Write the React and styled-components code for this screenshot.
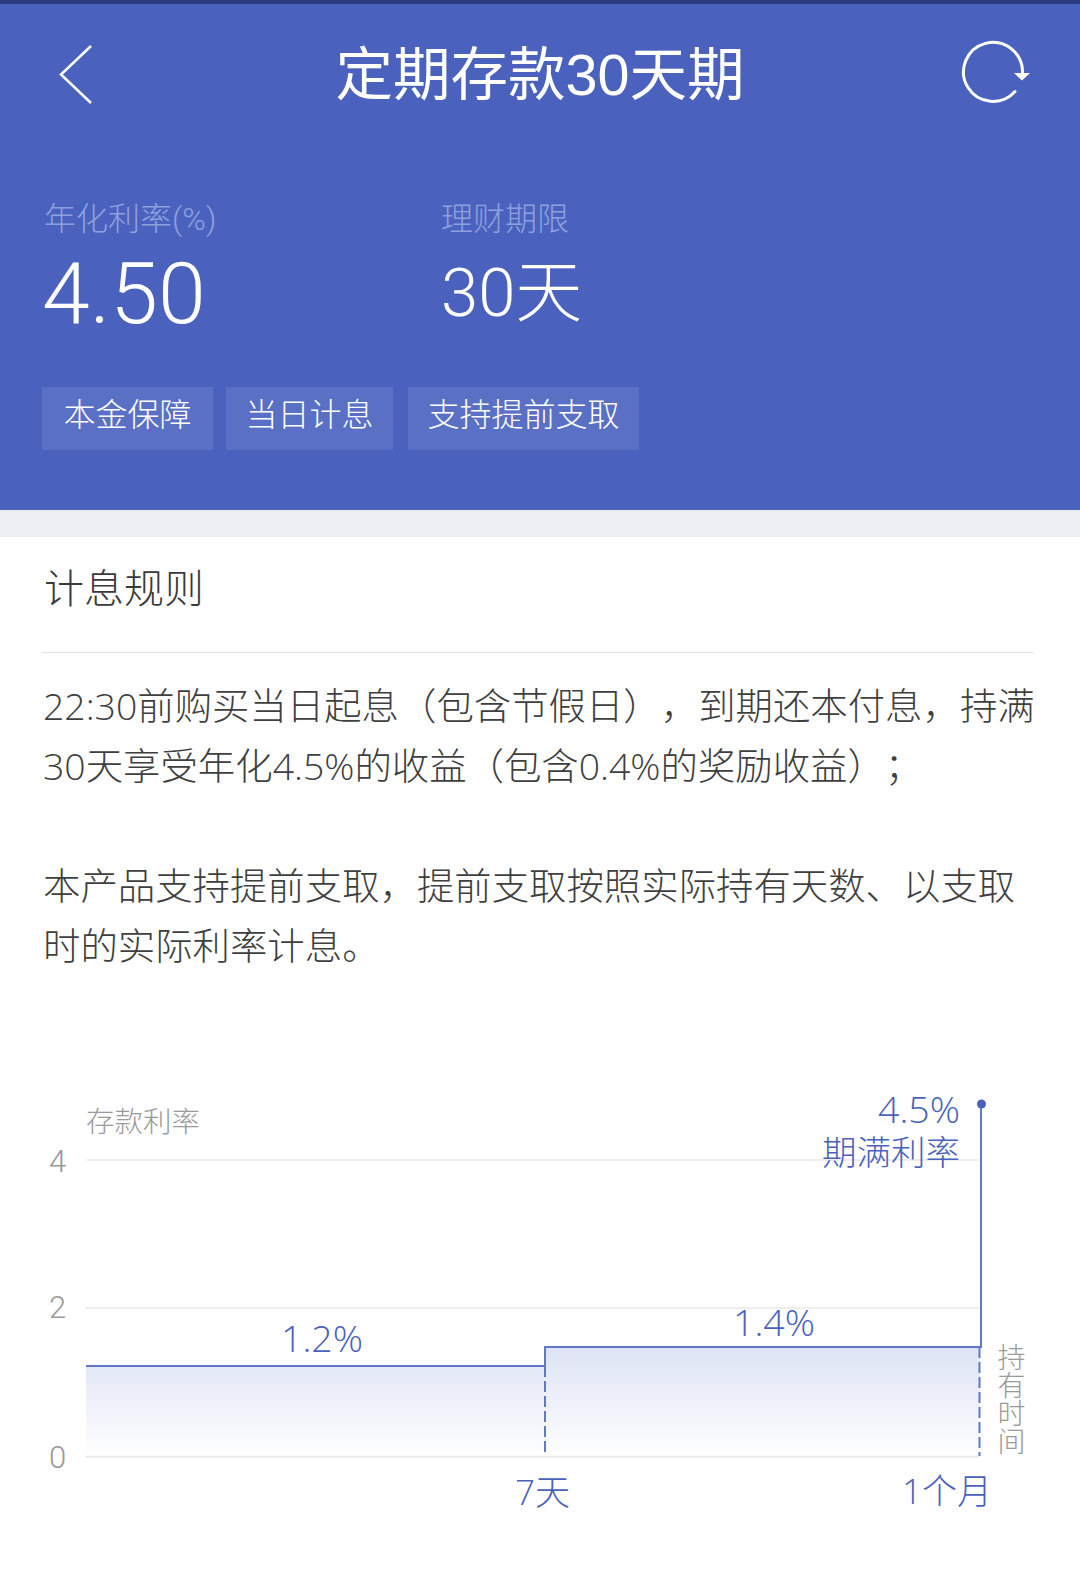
import styled, { createGlobalStyle } from 'styled-components';

const sansStack = `'Liberation Sans', 'Noto Sans CJK SC', sans-serif`;
const lightStack = `Roboto, 'Noto Sans CJK SC', sans-serif`;
const bodyStack = `'Open Sans', 'Noto Sans CJK SC', sans-serif`;

const GlobalStyle = createGlobalStyle`
  html, body {
    margin: 0;
    padding: 0;
    background: #fff;
  }
  body {
    font-family: ${sansStack};
    text-spacing-trim: space-all;
  }
`;

const Page = styled('div')`
  width: 1080px;
  height: 1587px;
  overflow: hidden;
  display: flex;
  flex-direction: column;
`;

const Header = styled('header')`
  height: 506px;
  background: #4a62bd;
  border-top: 4px solid #2b3b80;
  display: flex;
  flex-direction: column;
  color: #fff;
`;

const NavBar = styled('div')`
  height: 142px;
  display: grid;
  grid-template-columns: 1fr auto 1fr;
  align-items: center;
  padding: 0 50px 0 58px;
`;

const NavRight = styled('div')`
  display: flex;
  justify-content: flex-end;
`;

const NavLeft = styled('div')`
  display: flex;
`;

const NavTitle = styled('h1')`
  margin: 0 0 0 -8px;
  font-size: 57.5px;
  font-weight: 400;
  line-height: 70px;
`;

const Stats = styled('div')`
  display: flex;
  padding: 53px 0 0 44px;
`;

const Stat = styled('div')`
  width: ${(props) => props.$width}px;
  display: flex;
  flex-direction: column;
`;

const StatLabel = styled('span')`
  font-family: ${lightStack};
  font-weight: 300;
  font-size: 32px;
  line-height: 40px;
  color: #8fa0de;
`;

const StatValue = styled('span')`
  margin: ${(props) => props.$offset} 0 0 ${(props) => props.$shift}px;
  font-family: ${lightStack};
  font-size: ${(props) => props.$size}px;
  font-weight: 300;
  line-height: 84px;
`;

const Chips = styled('div')`
  display: flex;
  gap: 13px;
  margin: 51px 0 0 42px;
`;

const Chip = styled('span')`
  width: ${(props) => props.$width}px;
  height: 63px;
  padding-top: 7px;
  box-sizing: border-box;
  background: #5a70c5;
  font-family: ${lightStack};
  font-size: 32px;
  font-weight: 300;
  line-height: 42px;
  text-align: center;

  &:last-child {
    margin-left: 2px;
  }
`;

const Band = styled('div')`
  height: 27px;
  background: #eeeef5;
`;

const Rules = styled('section')`
  padding: 0 46px 0 42px;
`;

const RulesTitle = styled('h2')`
  margin: 0;
  height: 115px;
  border-bottom: 1px solid #e0e0e0;
  padding-left: 2px;
  font-family: ${lightStack};
  font-size: 40px;
  font-weight: 300;
  line-height: 105px;
  color: #3a3a3a;
`;

const RulesText = styled('p')`
  margin: 23px -6px 0 1px;
  font-family: ${bodyStack};
  font-size: 37.4px;
  font-weight: 300;
  line-height: 60px;
  color: #3f3f3f;

  & + & {
    margin-top: 60px;
  }
`;

const Chart = styled('svg')`
  display: block;
  margin-top: 104px;
  width: 1080px;
  height: 507px;
  flex: none;
`;

const GridLine = styled('line')`
  stroke: #e8e8e8;
  stroke-width: 1.5;
`;

const RateLine = styled('path')`
  fill: none;
  stroke: #6178c8;
  stroke-width: 2;
`;

const DashLine = styled('line')`
  stroke: #6178c8;
  stroke-width: 2;
  stroke-dasharray: 11 4;
`;

const AxisText = styled('text')`
  font-family: ${lightStack};
  font-weight: 300;
  font-size: ${(props) => props.$size || 28}px;
  fill: #9a9a9a;
`;

const VerticalAxisText = styled(AxisText)`
  writing-mode: vertical-rl;
  letter-spacing: 0.25px;
`;

const RateText = styled('text')`
  font-family: ${bodyStack};
  font-weight: 300;
  font-size: ${(props) => props.$size || 37.5}px;
  fill: #4a62bd;
  text-anchor: ${(props) => props.$anchor || 'start'};
`;

const RateCaption = styled(RateText)`
  font-family: ${sansStack};
  font-size: 34.5px;
`;

const ticks = [
  { label: '4', y: 1160, textY: 1172 },
  { label: '2', y: 1308, textY: 1318 },
  { label: '0', y: 1456.5, textY: 1468 },
];

const chips = [
  { label: '本金保障', width: 171 },
  { label: '当日计息', width: 167 },
  { label: '支持提前支取', width: 231 },
];

function BackIcon() {
  return (
    <svg width='36' height='62' viewBox='0 0 36 62' fill='none'>
      <path d='M33 2 L3 30.5 L33 59' stroke='#fff' strokeWidth='2.5' />
    </svg>
  );
}

function RefreshIcon() {
  return (
    <svg width='70' height='70' viewBox='0 -2 70 70' fill='none'>
      <path d='M55 49.6 A29.5 29.5 0 1 1 62.5 31' stroke='#fff' strokeWidth='3' strokeLinecap='round' />
      <path d='M54 31 L70 31 L62 38.5 Z' fill='#fff' />
    </svg>
  );
}

function RateChart() {
  return (
    <Chart viewBox='0 1080 1080 507'>
      <defs>
        <linearGradient id='rateFill' x1='0' y1='0' x2='0' y2='1'>
          <stop offset='0' stopColor='#dde3f5' />
          <stop offset='1' stopColor='#ffffff' />
        </linearGradient>
      </defs>

      {ticks.map((tick) => (
        <g key={tick.label}>
          <GridLine x1='86' x2='979' y1={tick.y} y2={tick.y} />
          <AxisText x='49' y={tick.textY} $size={31}>
            {tick.label}
          </AxisText>
        </g>
      ))}

      <path d='M86 1366 H545 V1347 H980 V1456 H86 Z' fill='url(#rateFill)' />
      <GridLine x1='86' x2='979' y1='1456.5' y2='1456.5' />
      <RateLine d='M86 1366 H545 V1347 H981 V1104' />
      <DashLine x1='545' x2='545' y1='1366' y2='1456' />
      <DashLine x1='979.5' x2='979.5' y1='1347' y2='1456' />
      <circle cx='981.5' cy='1104' r='4.5' fill='#4a62bd' />

      <AxisText x='86' y='1132' $size={28.5}>
        存款利率
      </AxisText>
      <VerticalAxisText x='1009' y='1343'>持有时间</VerticalAxisText>

      <RateText x='960' y='1122.5' $anchor='end'>4.5%</RateText>
      <RateCaption x='960' y='1164.5' $anchor='end'>期满利率</RateCaption>
      <RateText x='281' y='1352'>1.2%</RateText>
      <RateText x='733' y='1336'>1.4%</RateText>
      <RateText x='515' y='1505' $size={35}>7天</RateText>
      <RateText x='902' y='1504' $size={35}>1个月</RateText>
    </Chart>
  );
}

export default function App() {
  return (
    <Page>
      <GlobalStyle />
      <Header>
        <NavBar>
          <NavLeft>
            <BackIcon />
          </NavLeft>
          <NavTitle>定期存款30天期</NavTitle>
          <NavRight>
            <RefreshIcon />
          </NavRight>
        </NavBar>
        <Stats>
          <Stat $width={397}>
            <StatLabel>年化利率(%)</StatLabel>
            <StatValue $size={86} $offset='13px' $shift={-2}>4.50</StatValue>
          </Stat>
          <Stat $width={300}>
            <StatLabel>理财期限</StatLabel>
            <StatValue $size={67} $offset='12px' $shift={0}>30天</StatValue>
          </Stat>
        </Stats>
        <Chips>
          {chips.map((chip) => (
            <Chip key={chip.label} $width={chip.width}>
              {chip.label}
            </Chip>
          ))}
        </Chips>
      </Header>
      <Band />
      <Rules>
        <RulesTitle>计息规则</RulesTitle>
        <RulesText>
          22:30前购买当日起息（包含节假日），到期还本付息，持满30天享受年化4.5%的收益（包含0.4%的奖励收益）；
        </RulesText>
        <RulesText>本产品支持提前支取，提前支取按照实际持有天数、以支取时的实际利率计息。</RulesText>
      </Rules>
      <RateChart />
    </Page>
  );
}
